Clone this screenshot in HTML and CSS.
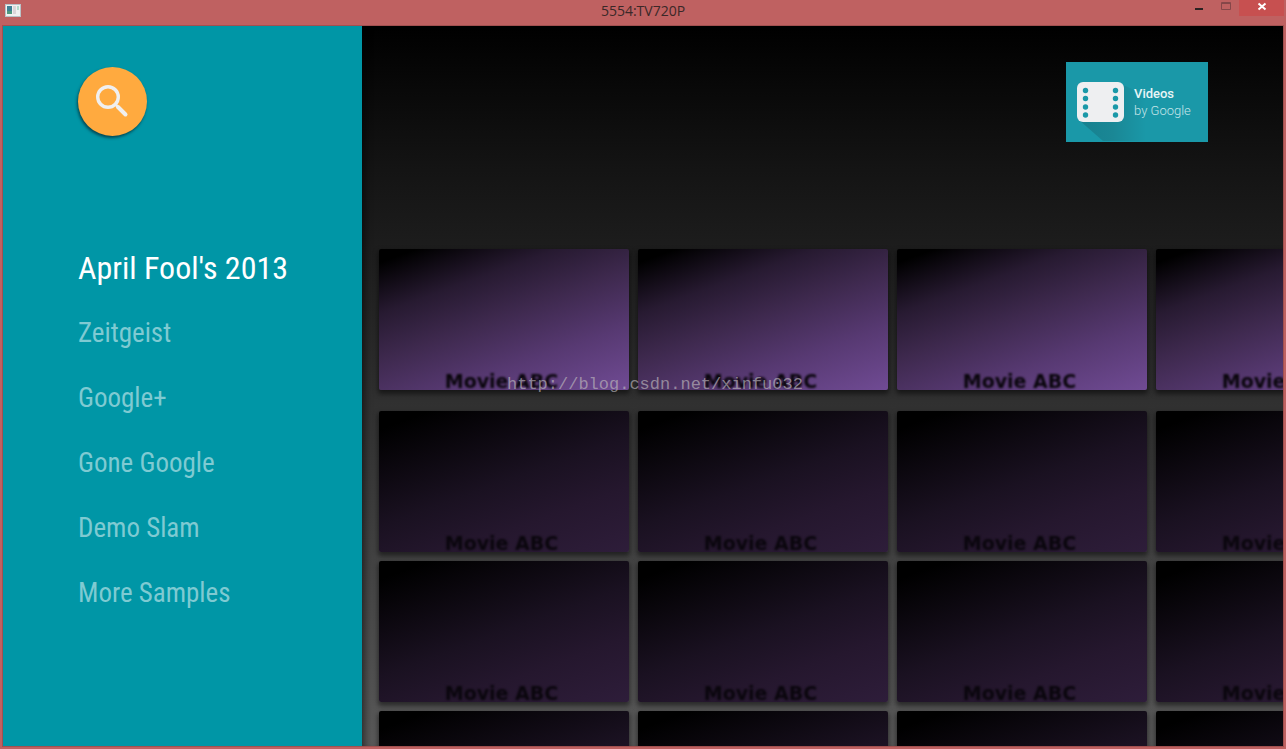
FILE: index.html
```html
<!DOCTYPE html>
<html lang="en">
<head>
<meta charset="utf-8">
<title>5554:TV720P</title>
<link rel="stylesheet" href="styles.css">
</head>
<body>
<div class="window">
  <header class="titlebar">
    <svg class="app-icon" width="16" height="13" viewBox="0 0 16 13" aria-hidden="true">
      <rect x="0.5" y="0.5" width="15" height="12" fill="#f1f1f1" stroke="#b9c3c8"/>
      <rect x="2" y="2" width="5" height="8" fill="#3f8094"/>
      <rect x="2" y="7" width="5" height="3" fill="#4f9a80"/>
      <rect x="8" y="2" width="3" height="8" fill="#dcd6d9"/>
      <rect x="12" y="2" width="2" height="4" fill="#b3dccb"/>
    </svg>
    <h1 class="title">5554:TV720P</h1>
    <div class="controls">
      <button class="control" aria-label="Minimize"><svg width="27" height="16"><rect x="10" y="8" width="8" height="2" fill="#2b2222"/></svg></button>
      <button class="control" aria-label="Maximize"><svg width="27" height="16"><path d="M9.500 9.500V2.500H18.500V9.500Z M9 3.500H19" fill="none" stroke="#864749"/></svg></button>
      <button class="control control-close" aria-label="Close"><svg width="45" height="16"><path d="M19.500 3.500L26.500 9.500M26.500 3.500L19.500 9.500" fill="none" stroke="#fff" stroke-width="2"/></svg></button>
    </div>
  </header>
  <main class="screen">
    <aside class="sidebar">
      <button class="search" aria-label="Search">
        <svg width="69" height="69" viewBox="0 0 69 69" fill="none" stroke="#f0efef">
          <circle cx="30" cy="30" r="10.300" stroke-width="3.400"/>
          <path d="M37 37L40 40" stroke-width="2.600"/>
          <path d="M40 40L47.500 47.500" stroke-width="4"  stroke-linecap="round"/>
        </svg>
      </button>
      <nav class="categories">
        <a class="category category-active" href="#april">April Fool's 2013</a>
        <a class="category" href="#zeitgeist">Zeitgeist</a>
        <a class="category" href="#plus">Google+</a>
        <a class="category" href="#gone">Gone Google</a>
        <a class="category" href="#demo">Demo Slam</a>
        <a class="category" href="#more">More Samples</a>
      </nav>
    </aside>
    <section class="browse">
      <div class="brand">
        <svg width="142" height="80" viewBox="0 0 142 80" role="img" aria-label="Videos by Google">
          <defs>
            <linearGradient id="cast" x1="0" x2="1" y1="0" y2="0">
              <stop offset="0" stop-color="#17808f"/>
              <stop offset="0.5" stop-color="#1a8795"/>
              <stop offset="1" stop-color="#1a98a8"/>
            </linearGradient>
          </defs>
          <rect width="142" height="80" fill="#1a98a8"/>
          <path d="M13 58L37 79H80V33L57 23Z" fill="url(#cast)"/>
          <rect x="11" y="20" width="47" height="40" rx="6" fill="#eeeff1"/>
          <g fill="#1a98a8">
            <circle cx="19.500" cy="28.500" r="2.700"/><circle cx="19.500" cy="36.500" r="2.700"/><circle cx="19.500" cy="45" r="2.700"/><circle cx="19.500" cy="53" r="2.700"/>
            <circle cx="49.500" cy="28.500" r="2.700"/><circle cx="49.500" cy="36.500" r="2.700"/><circle cx="49.500" cy="45" r="2.700"/><circle cx="49.500" cy="53" r="2.700"/>
          </g>
          <text class="brand-name" x="68" y="36">Videos</text>
          <text class="brand-owner" x="68" y="53">by Google</text>
        </svg>
      </div>
      <div class="rows">
        <div class="row row-active">
          <article class="card"><span class="card-label">Movie ABC</span></article>
          <article class="card"><span class="card-label">Movie ABC</span></article>
          <article class="card"><span class="card-label">Movie ABC</span></article>
          <article class="card"><span class="card-label">Movie ABC</span></article>
        </div>
        <div class="row">
          <article class="card"><span class="card-label">Movie ABC</span></article>
          <article class="card"><span class="card-label">Movie ABC</span></article>
          <article class="card"><span class="card-label">Movie ABC</span></article>
          <article class="card"><span class="card-label">Movie ABC</span></article>
        </div>
        <div class="row">
          <article class="card"><span class="card-label">Movie ABC</span></article>
          <article class="card"><span class="card-label">Movie ABC</span></article>
          <article class="card"><span class="card-label">Movie ABC</span></article>
          <article class="card"><span class="card-label">Movie ABC</span></article>
        </div>
        <div class="row">
          <article class="card"></article>
          <article class="card"></article>
          <article class="card"></article>
          <article class="card"></article>
        </div>
      </div>
    </section>
  </main>
  <p class="watermark">http://blog.csdn.net/xinfu032</p>
</div>
</body>
</html>
```
FILE: styles.css
```css
* { box-sizing: border-box; }

body { margin: 0; }

button {
  border: 0;
  padding: 0;
  background: none;
}

svg { display: block; }

.window {
  position: relative;
  display: flex;
  flex-direction: column;
  height: 100vh;
  padding: 0 2px 2px;
  background: #bf6161;
}

.titlebar {
  display: grid;
  grid-template-columns: 1fr auto 1fr;
  align-items: start;
  height: 25px;
}

.app-icon { margin: 4px 0 0 3px; }

.title {
  margin: 0;
  font: 400 14px/21px "Open Sans", "Noto Sans", sans-serif;
  color: #3a2828;
}

.controls {
  display: flex;
  justify-content: flex-end;
}

.control-close { background: #c75050; }

.screen {
  display: flex;
  flex: 1;
  min-height: 0;
  border: 1px solid #a25050;
}

.sidebar {
  flex: none;
  width: 359px;
  padding: 41px 0 0 75px;
  background: #0096a6;
}

.search {
  border-radius: 50%;
  background: #ffaa3f;
  box-shadow: -1px 2px 3px rgba(0, 40, 50, 0.7);
}

.categories {
  display: flex;
  flex-direction: column;
  margin-top: 96px;
}

.category {
  font: 400 27px/65px "Roboto Condensed", "Liberation Sans Narrow", Roboto, sans-serif;
  color: #7fcad2;
  text-decoration: none;
  white-space: nowrap;
}

.category-active {
  font-size: 32px;
  color: #fff;
}

.browse {
  flex: 1;
  min-width: 0;
  overflow: hidden;
  padding-top: 36px;
  background: linear-gradient(#000, #141414 20%, #1c1c1c 30%, #303030 52%, #5a5a5a);
  box-shadow: inset 8px 0 8px -6px rgba(0, 0, 0, 0.6);
}

.brand {
  display: flex;
  justify-content: flex-end;
  padding-right: 75px;
}

.brand-name {
  font: 500 13px Roboto, sans-serif;
  fill: #e8f5f6;
}

.brand-owner {
  font: 300 13px Roboto, sans-serif;
  fill: #c5e5e9;
}

.rows {
  display: flex;
  flex-direction: column;
  gap: 9px;
  padding: 107px 0 0 17px;
}

.row {
  display: flex;
  gap: 9px;
}

.row-active { margin-bottom: 12px; }

.card {
  display: flex;
  flex: none;
  align-items: flex-end;
  justify-content: center;
  width: 250px;
  height: 141px;
  padding-right: 5px;
  border-radius: 2px;
  background: linear-gradient(160deg, #000 8%, #1a1121 50%, #25172e 72%, #2e1d3a);
  box-shadow: 0 3px 5px 1px rgba(0, 0, 0, 0.5);
}

.row-active .card {
  background: linear-gradient(160deg, #000 6%, #271a31 28%, #3e294e 48%, #573972 72%, #704b94);
}

.card-label {
  font: 700 19px/18px "DejaVu Sans", sans-serif;
  color: #0a060d;
  filter: blur(1px);
}

.watermark {
  position: absolute;
  top: 374px;
  left: 507px;
  margin: 0;
  font: 400 17px/22px "Liberation Mono", monospace;
  color: rgba(190, 185, 190, 0.65);
}
```
